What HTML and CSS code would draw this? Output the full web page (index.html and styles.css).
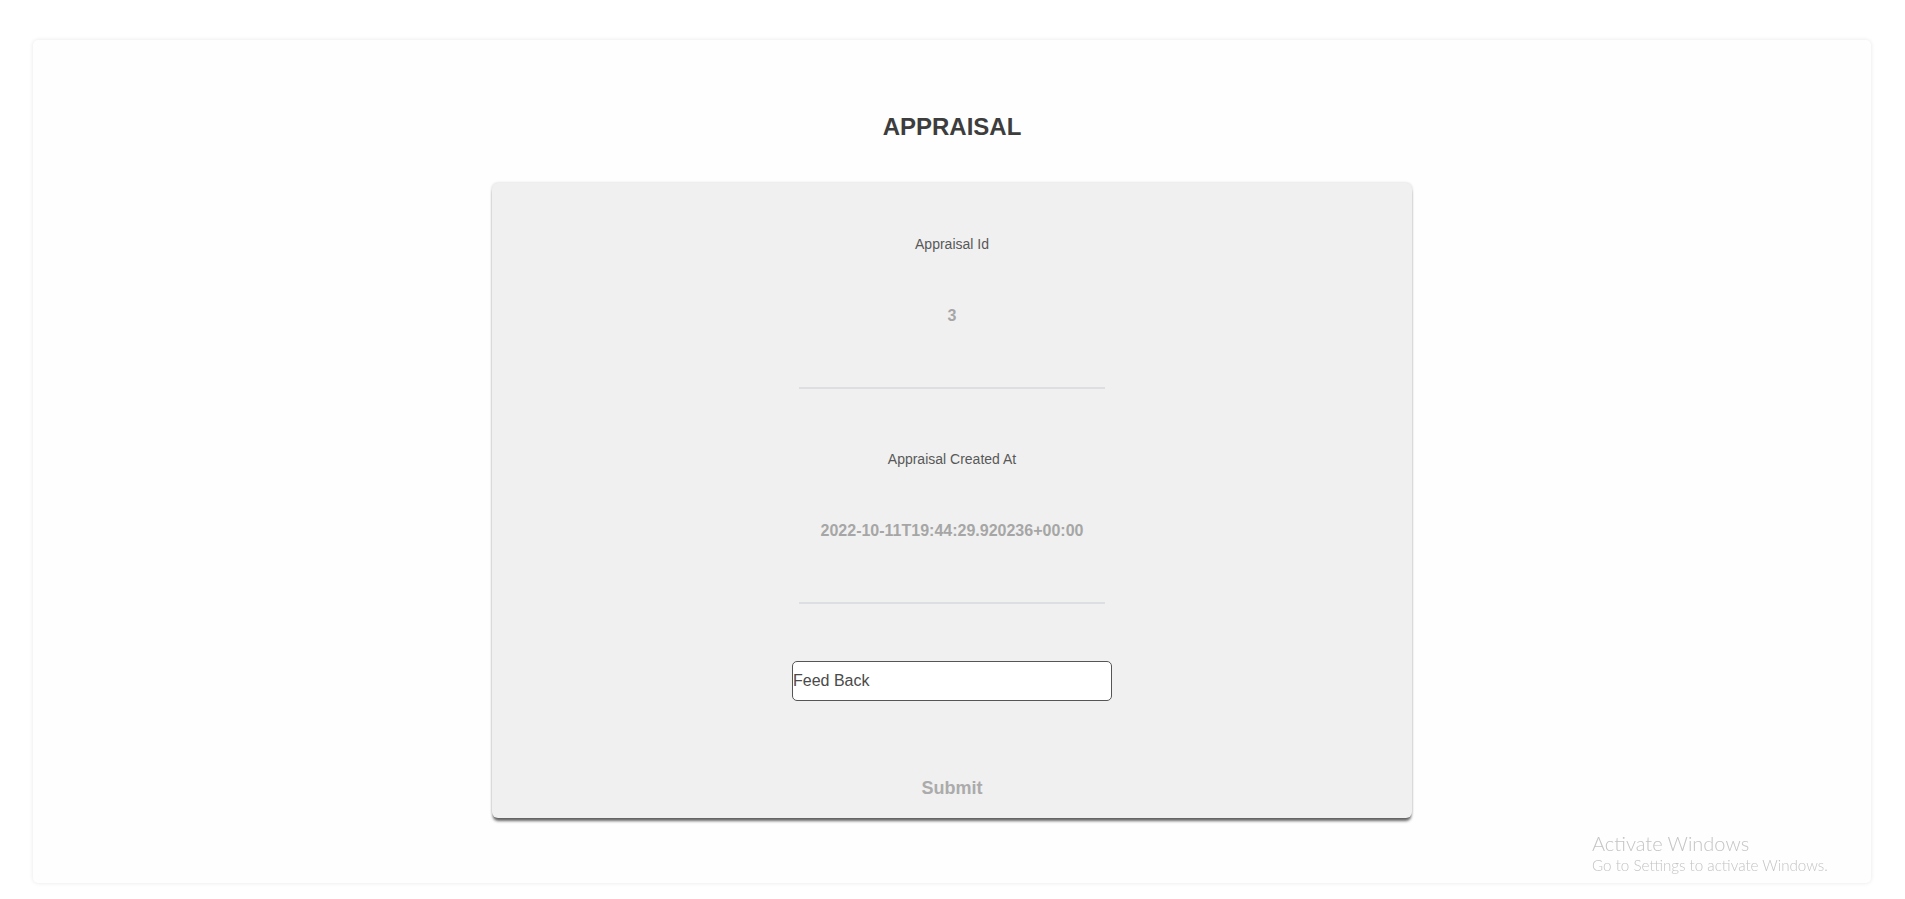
FILE: index.html
```html
<!DOCTYPE html>
<html lang="en">
<head>
<meta charset="utf-8">
<title>Appraisal</title>
<link rel="stylesheet" href="styles.css">
</head>
<body>
<div class="page">
  <div class="outer-card">
    <h1 class="title">APPRAISAL</h1>
    <div class="appraisal-card">
      <div class="field">
        <div class="field-label">Appraisal Id</div>
        <div class="field-value">3</div>
        <div class="field-rule"></div>
      </div>
      <div class="field">
        <div class="field-label">Appraisal Created At</div>
        <div class="field-value">2022-10-11T19:44:29.920236+00:00</div>
        <div class="field-rule"></div>
      </div>
      <input class="feedback-input" type="text" placeholder="Feed Back">
      <button class="submit-btn" type="button">Submit</button>
    </div>
  </div>
</div>
<div class="activate">
  <div class="activate-title">Activate Windows</div>
  <div class="activate-sub">Go to Settings to activate Windows.</div>
</div>
</body>
</html>
```
FILE: styles.css
```css
html, body {
  margin: 0;
  padding: 0;
  background: #ffffff;
  font-family: "Liberation Sans", Arial, sans-serif;
}

.page {
  padding: 40px 34px 16px 33px;
}

.outer-card {
  background: #fefefe;
  border-radius: 5px;
  box-shadow: 0 0 4px rgba(0, 0, 0, 0.1);
  padding: 73px 0 65px 0;
  display: flex;
  flex-direction: column;
  align-items: center;
}

.title {
  margin: 0 0 42px 0;
  font-size: 24px;
  line-height: 28px;
  font-weight: bold;
  color: #3d3d3d;
  text-align: center;
}

.appraisal-card {
  width: 920px;
  box-sizing: border-box;
  background: #f0f0f0;
  border-radius: 6px;
  box-shadow: 0 4px 3px -1px rgba(0, 0, 0, 0.6), 0 0 3px rgba(0, 0, 0, 0.18);
  padding: 53px 0 19px 0;
  display: flex;
  flex-direction: column;
  align-items: center;
}

.field {
  display: flex;
  flex-direction: column;
  align-items: center;
  margin-bottom: 62px;
}

.field + .field {
  margin-bottom: 0;
}

.field-label {
  font-size: 14px;
  line-height: 16px;
  color: #585858;
  margin-bottom: 55px;
}

.field-value {
  font-size: 16px;
  line-height: 18px;
  font-weight: bold;
  color: #a6a6a6;
}

.field-rule {
  width: 306px;
  height: 2px;
  background: #dcdee2;
  margin-top: 62px;
}

.feedback-input {
  margin-top: 57px;
  width: 320px;
  height: 40px;
  box-sizing: border-box;
  border: 1px solid #555555;
  border-radius: 5px;
  background: #ffffff;
  padding: 0;
  font-family: "Liberation Sans", Arial, sans-serif;
  font-size: 16px;
  color: #444444;
  outline: none;
}

.feedback-input::placeholder {
  color: #4a4a4a;
  opacity: 1;
}

.submit-btn {
  margin-top: 77px;
  border: none;
  background: transparent;
  padding: 0;
  font-family: "Liberation Sans", Arial, sans-serif;
  font-size: 18px;
  line-height: 21px;
  font-weight: bold;
  color: #ababab;
  cursor: pointer;
}

.activate {
  position: fixed;
  left: 1592px;
  top: 831px;
  pointer-events: none;
  font-family: Lato, "Open Sans", sans-serif;
  color: #c4c4c4;
}

.activate-title {
  font-size: 20px;
  line-height: 24px;
  font-weight: 300;
}

.activate-sub {
  font-size: 15.2px;
  line-height: 20px;
  font-weight: 300;
}
```
